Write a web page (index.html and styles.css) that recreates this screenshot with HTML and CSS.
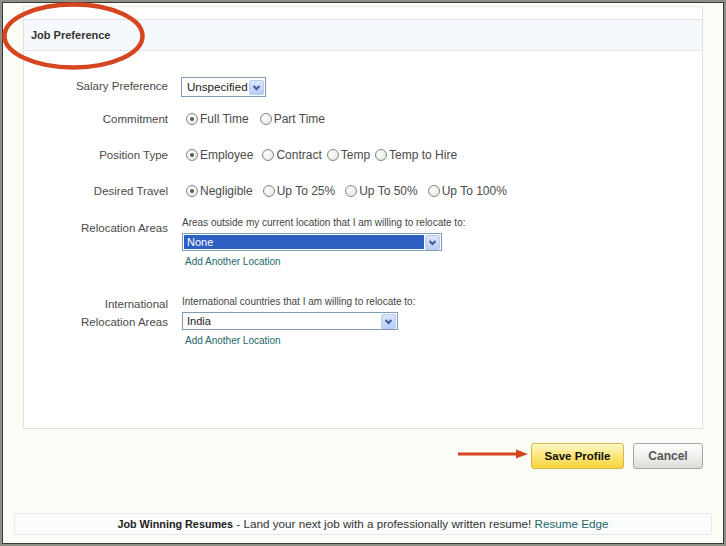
FILE: index.html
```html
<!DOCTYPE html>
<html>
<head>
<meta charset="utf-8">
<link rel="stylesheet" href="styles.css">
</head>
<body>
<div class="frame">
  <div class="panel">
    <div class="panel-head"><h2 class="title">Job Preference</h2></div>
    <div class="form">
      <div class="row r-salary">
        <div class="label">Salary Preference</div>
        <div class="field">
          <div class="select sel-salary"><span class="sel-text">Unspecified</span><span class="sel-btn"><svg width="15" height="15" viewBox="0 0 15 15"><path d="M4.5 6 L7.5 9 L10.5 6" fill="none" stroke="#3b5a9a" stroke-width="2"/></svg></span></div>
        </div>
      </div>
      <div class="row r-commit">
        <div class="label">Commitment</div>
        <div class="field opts opts-commit">
          <span class="opt"><span class="radio on"></span>Full Time</span>
          <span class="opt"><span class="radio"></span>Part Time</span>
        </div>
      </div>
      <div class="row r-pos">
        <div class="label">Position Type</div>
        <div class="field opts opts-pos">
          <span class="opt"><span class="radio on"></span>Employee</span>
          <span class="opt"><span class="radio"></span>Contract</span>
          <span class="opt"><span class="radio"></span>Temp</span>
          <span class="opt"><span class="radio"></span>Temp to Hire</span>
        </div>
      </div>
      <div class="row r-travel">
        <div class="label">Desired Travel</div>
        <div class="field opts opts-travel">
          <span class="opt"><span class="radio on"></span>Negligible</span>
          <span class="opt"><span class="radio"></span>Up To 25%</span>
          <span class="opt"><span class="radio"></span>Up To 50%</span>
          <span class="opt"><span class="radio"></span>Up To 100%</span>
        </div>
      </div>
      <div class="row r-reloc">
        <div class="label lab-reloc">Relocation Areas</div>
        <div class="field stack">
          <div class="hint">Areas outside my current location that I am willing to relocate to:</div>
          <div class="select sel-reloc"><span class="sel-text selected">None</span><span class="sel-btn"><svg width="15" height="15" viewBox="0 0 15 15"><path d="M4.5 6 L7.5 9 L10.5 6" fill="none" stroke="#3b5a9a" stroke-width="2"/></svg></span></div>
          <a class="add-link">Add Another Location</a>
        </div>
      </div>
      <div class="row r-intl">
        <div class="label lab-intl">International<br>Relocation Areas</div>
        <div class="field stack">
          <div class="hint">International countries that I am willing to relocate to:</div>
          <div class="select sel-intl"><span class="sel-text">India</span><span class="sel-btn"><svg width="15" height="15" viewBox="0 0 15 15"><path d="M4.5 6 L7.5 9 L10.5 6" fill="none" stroke="#3b5a9a" stroke-width="2"/></svg></span></div>
          <a class="add-link">Add Another Location</a>
        </div>
      </div>
    </div>
  </div>

  <div class="actions">
    <button class="btn btn-save">Save Profile</button>
    <button class="btn btn-cancel">Cancel</button>
  </div>

  <div class="footer"><b>Job Winning Resumes</b> - Land your next job with a professionally written resume! <a class="foot-link">Resume Edge</a></div>

  <svg class="mark-circle" width="150" height="74" viewBox="0 0 150 74"><ellipse cx="73.5" cy="36" rx="69" ry="31.5" fill="none" stroke="#d6451f" stroke-width="4.5"/></svg>
  <svg class="mark-arrow" width="72" height="12" viewBox="0 0 72 12"><line x1="0" y1="6" x2="60" y2="6" stroke="#d6451f" stroke-width="3"/><polygon points="58,1.5 70,6 58,10.5" fill="#d6451f"/></svg>
</div>
</body>
</html>
```

FILE: styles.css
```css
html, body {
  margin: 0;
  padding: 0;
  background: #fdfdf8;
}

.frame {
  position: relative;
  box-sizing: border-box;
  width: 726px;
  height: 546px;
  border: 2px solid #8e8e86;
  box-shadow: inset 0 0 0 1px #3a3a36;
  background: #fcfcf6;
  padding: 4px 12px 0 12px;
  font-family: "Liberation Sans", Arial, sans-serif;
  color: #3a3a3a;
}

.panel {
  box-sizing: border-box;
  margin: 0 9px 0 9px;
  height: 423px;
  border: 1px solid #e1e1dc;
  border-top-color: #ecece6;
  background: #ffffff;
}

.panel-head {
  margin-top: 12px;
  height: 32px;
  box-sizing: border-box;
  border-top: 1px solid #dfe5ea;
  border-bottom: 1px solid #dfe5ea;
  background: #f5f9fc;
  display: flex;
  align-items: center;
  padding-left: 7px;
}

.title {
  margin: 0;
  font-size: 11px;
  font-weight: bold;
  color: #333;
}

.form {
  padding-top: 26px;
}

.row {
  display: flex;
  align-items: flex-start;
}

.label {
  box-sizing: border-box;
  width: 157px;
  flex: none;
  padding-right: 13px;
  text-align: right;
  font-size: 11.5px;
  line-height: 18px;
  color: #4a4a4a;
}

.field {
  font-size: 12px;
  color: #4a4a4a;
}

.r-salary { height: 20px; }
.r-commit { margin-top: 13px; height: 18px; }
.r-pos { margin-top: 18px; height: 18px; }
.r-travel { margin-top: 18px; height: 18px; }
.r-reloc { margin-top: 17px; }
.r-intl { margin-top: 28px; }

.lab-reloc { padding-top: 2px; }
.lab-intl { margin-top: -1px; }

.opts {
  display: flex;
  align-items: center;
  height: 18px;
  padding-left: 5px;
}

.opts-commit { gap: 11px; }
.opts-pos { gap: 5px; }
.opts-pos .opt:first-child { margin-right: 4px; }
.opts-travel { gap: 10px; }

.opt {
  display: inline-flex;
  align-items: center;
  white-space: nowrap;
  line-height: 18px;
}

.radio {
  box-sizing: border-box;
  width: 12px;
  height: 12px;
  border-radius: 50%;
  border: 1px solid #7d8a86;
  background: radial-gradient(circle at 35% 35%, #ffffff 0%, #e9ebe6 70%, #d6d9d2 100%);
  margin-right: 2px;
  position: relative;
  flex: none;
}

.radio.on::after {
  content: "";
  position: absolute;
  left: 3px;
  top: 3px;
  width: 4px;
  height: 4px;
  border-radius: 50%;
  background: #4e5f4e;
}

.stack {
  display: flex;
  flex-direction: column;
  align-items: flex-start;
  padding-left: 1px;
}

.hint {
  font-size: 10px;
  line-height: 12px;
  color: #444;
  white-space: nowrap;
}

.select {
  box-sizing: border-box;
  display: flex;
  align-items: center;
  border: 1px solid #7f9db9;
  background: #fff;
  padding: 1px;
  font-size: 11px;
  color: #222;
}

.sel-salary { width: 85px; height: 20px; font-size: 11.6px; }
.sel-reloc { width: 260px; height: 18px; margin-top: 4px; }
.sel-intl { width: 216px; height: 18px; margin-top: 4px; }

.sel-text {
  flex: 1;
  overflow: hidden;
  white-space: nowrap;
  padding-left: 3px;
  line-height: 14px;
  height: 14px;
}

.sel-salary .sel-text { padding-left: 4px; }

.sel-text.selected {
  background: #2e5fc2;
  color: #fff;
  margin-right: 1px;
}

.sel-btn {
  flex: none;
  width: 15px;
  height: 15px;
  box-sizing: border-box;
  border: 1px solid #b9cbef;
  border-radius: 2px;
  background: linear-gradient(#dbe6fd, #b9cdf7);
  display: flex;
}

.sel-btn svg { display: block; margin: -1px; }

.add-link {
  margin-top: 5px;
  padding-left: 3px;
  font-size: 10px;
  line-height: 12px;
  color: #22686a;
}

.actions {
  display: flex;
  justify-content: flex-end;
  gap: 9px;
  margin: 14px 9px 0 0;
}

.btn {
  box-sizing: border-box;
  height: 26px;
  border-radius: 3px;
  font-family: "Liberation Sans", Arial, sans-serif;
  font-weight: bold;
  padding: 0;
  cursor: pointer;
}

.btn-save {
  width: 93px;
  font-size: 11.5px;
  color: #111;
  border: 1px solid #d3b84a;
  background: linear-gradient(#fff8c8 0%, #fbe57a 50%, #f6d43c 100%);
}

.btn-cancel {
  width: 70px;
  font-size: 12px;
  color: #555;
  border: 1px solid #a6a6a6;
  background: linear-gradient(#ffffff 0%, #f0f0ee 50%, #dcdcd8 100%);
}

.footer {
  box-sizing: border-box;
  margin-top: 44px;
  height: 22px;
  border: 1px solid #e6e9ea;
  border-radius: 2px;
  background: #fafcfc;
  text-align: center;
  font-size: 11.7px;
  line-height: 20px;
  color: #333;
}

.footer b { color: #222; font-size: 10.8px; }

.foot-link { color: #22686a; }

.mark-circle {
  position: absolute;
  left: -2px;
  top: -2px;
}

.mark-arrow {
  position: absolute;
  left: 456px;
  top: 446px;
}
```
